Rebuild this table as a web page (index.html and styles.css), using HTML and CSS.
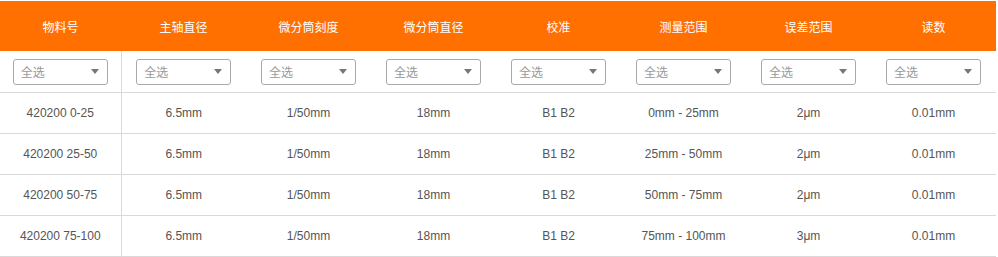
FILE: index.html
```html
<!DOCTYPE html>
<html lang="zh">
<head>
<meta charset="utf-8">
<link rel="stylesheet" href="styles.css">
</head>
<body>
<div class="wrap">
<table class="spec">
  <colgroup>
    <col class="c-first">
    <col span="7" class="c-rest">
  </colgroup>
  <thead>
    <tr class="head">
      <th>物料号</th><th>主轴直径</th><th>微分筒刻度</th><th>微分筒直径</th><th>校准</th><th>测量范围</th><th>误差范围</th><th>读数</th>
    </tr>
    <tr class="filters">
      <td class="first"><div class="sel"><span>全选</span><i class="caret"></i></div></td>
      <td><div class="sel"><span>全选</span><i class="caret"></i></div></td>
      <td><div class="sel"><span>全选</span><i class="caret"></i></div></td>
      <td><div class="sel"><span>全选</span><i class="caret"></i></div></td>
      <td><div class="sel"><span>全选</span><i class="caret"></i></div></td>
      <td><div class="sel"><span>全选</span><i class="caret"></i></div></td>
      <td><div class="sel"><span>全选</span><i class="caret"></i></div></td>
      <td><div class="sel"><span>全选</span><i class="caret"></i></div></td>
    </tr>
  </thead>
  <tbody>
    <tr><td class="first">420200 0-25</td><td>6.5mm</td><td>1/50mm</td><td>18mm</td><td>B1 B2</td><td>0mm - 25mm</td><td>2μm</td><td>0.01mm</td></tr>
    <tr><td class="first">420200 25-50</td><td>6.5mm</td><td>1/50mm</td><td>18mm</td><td>B1 B2</td><td>25mm - 50mm</td><td>2μm</td><td>0.01mm</td></tr>
    <tr><td class="first">420200 50-75</td><td>6.5mm</td><td>1/50mm</td><td>18mm</td><td>B1 B2</td><td>50mm - 75mm</td><td>2μm</td><td>0.01mm</td></tr>
    <tr><td class="first">420200 75-100</td><td>6.5mm</td><td>1/50mm</td><td>18mm</td><td>B1 B2</td><td>75mm - 100mm</td><td>3μm</td><td>0.01mm</td></tr>
  </tbody>
</table>
</div>
</body>
</html>
```
FILE: styles.css
```css
html, body {
  margin: 0;
  padding: 0;
  background: #fff;
}
body {
  font-family: "Liberation Sans", Arial, "Noto Sans CJK SC", sans-serif;
  font-size: 12px;
  color: #555;
}
.wrap {
  padding-top: 1px;
}
.spec {
  width: 996px;
  border-collapse: collapse;
  table-layout: fixed;
}
.c-first { width: 121px; }
.c-rest { width: 125px; }
.spec th {
  background: #ff7000;
  color: #fff;
  height: 50px;
  padding: 0;
  font-family: "Noto Sans CJK SC", sans-serif;
  font-weight: normal;
  font-size: 12px;
  text-align: center;
  vertical-align: middle;
}
.spec td {
  padding: 0;
  height: 40px;
  text-align: center;
  vertical-align: middle;
  border-bottom: 1px solid #d9d9d9;
}
.spec td.first {
  border-right: 1px solid #d9d9d9;
}
.filters td {
  height: 41px;
}
.sel {
  box-sizing: border-box;
  width: 95px;
  height: 26px;
  margin: 0 auto;
  border: 1px solid #a9a9a9;
  border-radius: 3px;
  display: flex;
  align-items: center;
  justify-content: space-between;
  padding: 0 8px 0 7px;
  font-family: "Noto Sans CJK SC", sans-serif;
  font-size: 12px;
  color: #999;
}
.caret {
  width: 0;
  height: 0;
  border-left: 4px solid transparent;
  border-right: 4px solid transparent;
  border-top: 5px solid #777;
}
```
